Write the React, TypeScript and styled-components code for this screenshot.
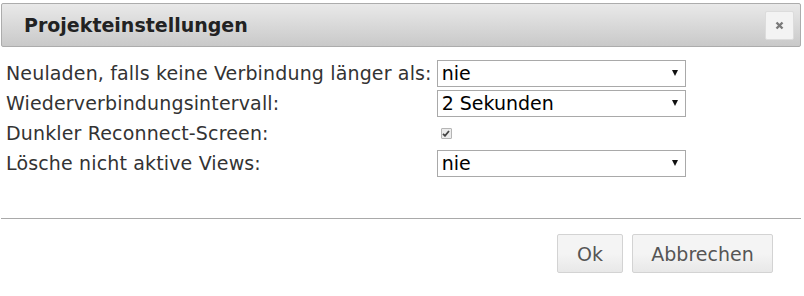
import React from "react";
import styled, { createGlobalStyle } from "styled-components";

const GlobalStyle = createGlobalStyle`
  html, body {
    margin: 0;
    padding: 0;
    background: #fff;
  }
  body {
    font-family: "DejaVu Sans", Verdana, sans-serif;
  }
`;

const Dialog = styled.div`
  width: 804px;
  height: 296px;
  padding-top: 3px;
  box-sizing: border-box;
  background: #fff;
`;

const Header = styled.div`
  display: flex;
  align-items: center;
  justify-content: space-between;
  height: 42px;
  margin: 0 3px 0 1px;
  padding: 0 6px 0 22px;
  border: 1px solid #acacac;
  border-radius: 2px;
  background: linear-gradient(to bottom, #e9e9e9 0%, #c9c9c9 100%);
`;

const Title = styled.h1`
  margin: 0;
  font-size: 19px;
  font-weight: bold;
  color: #222;
`;

const CloseButton = styled.button`
  display: flex;
  align-items: center;
  justify-content: center;
  width: 29px;
  height: 29px;
  padding: 0;
  border: 1px solid #dcdcdc;
  border-radius: 2px;
  background: #f3f3f3;
  cursor: pointer;
`;

const Form = styled.div`
  display: grid;
  grid-template-columns: auto 249px;
  grid-auto-rows: 30px;
  column-gap: 5px;
  align-items: center;
  justify-content: start;
  margin: 11px 0 0 6px;
`;

const Label = styled.label`
  font-size: 19px;
  letter-spacing: 0.15px;
  color: #333;
  white-space: nowrap;
`;

const SelectBox = styled.div`
  display: flex;
  align-items: center;
  justify-content: space-between;
  height: 27px;
  box-sizing: border-box;
  padding: 0 7px 0 4px;
  border: 1px solid #a9a9a9;
  font-size: 19px;
  color: #000;
  background: #fff;
`;

const Arrow = styled.span`
  width: 0;
  height: 0;
  border-left: 3px solid transparent;
  border-right: 3px solid transparent;
  border-top: 6px solid #111;
`;

const CheckBox = styled.span`
  display: flex;
  align-items: center;
  justify-content: center;
  width: 9px;
  height: 9px;
  margin-left: 4px;
  border: 1px solid #b5b5b5;
  border-radius: 1px;
  background: #ececec;
`;

const Separator = styled.hr`
  margin: 40px 3px 0 1px;
  border: none;
  border-top: 1px solid #a9a9a9;
`;

const Footer = styled.div`
  display: flex;
  justify-content: flex-end;
  gap: 9px;
  margin-top: 15px;
  padding-right: 31px;
`;

const Button = styled.button<{ w: number }>`
  width: ${(p) => p.w}px;
  height: 39px;
  border: 1px solid #d3d3d3;
  border-radius: 2px;
  background: linear-gradient(to bottom, #f4f4f4 0%, #f4f4f4 50%, #e8e8e8 100%);
  font-family: "DejaVu Sans", Verdana, sans-serif;
  font-size: 19px;
  color: #555;
  cursor: pointer;
`;

const Select: React.FC<{ value: string }> = ({ value }) => (
  <SelectBox>
    <span>{value}</span>
    <Arrow />
  </SelectBox>
);

export default function App() {
  return (
    <Dialog>
      <GlobalStyle />
      <Header>
        <Title>Projekteinstellungen</Title>
        <CloseButton aria-label="close">
          <svg width="9" height="9" viewBox="0 0 9 9">
            <path d="M1.5 1.5 L7.5 7.5 M7.5 1.5 L1.5 7.5" stroke="#7a7a7a" strokeWidth="2.4" />
          </svg>
        </CloseButton>
      </Header>
      <Form>
        <Label>Neuladen, falls keine Verbindung länger als:</Label>
        <Select value="nie" />
        <Label>Wiederverbindungsintervall:</Label>
        <Select value="2 Sekunden" />
        <Label>Dunkler Reconnect-Screen:</Label>
        <CheckBox>
          <svg width="8" height="7" viewBox="0 0 8 7">
            <path d="M1 3.8 L3 5.8 L7 1" fill="none" stroke="#444" strokeWidth="1.8" />
          </svg>
        </CheckBox>
        <Label>Lösche nicht aktive Views:</Label>
        <Select value="nie" />
      </Form>
      <Separator />
      <Footer>
        <Button w={66}>Ok</Button>
        <Button w={141}>Abbrechen</Button>
      </Footer>
    </Dialog>
  );
}
